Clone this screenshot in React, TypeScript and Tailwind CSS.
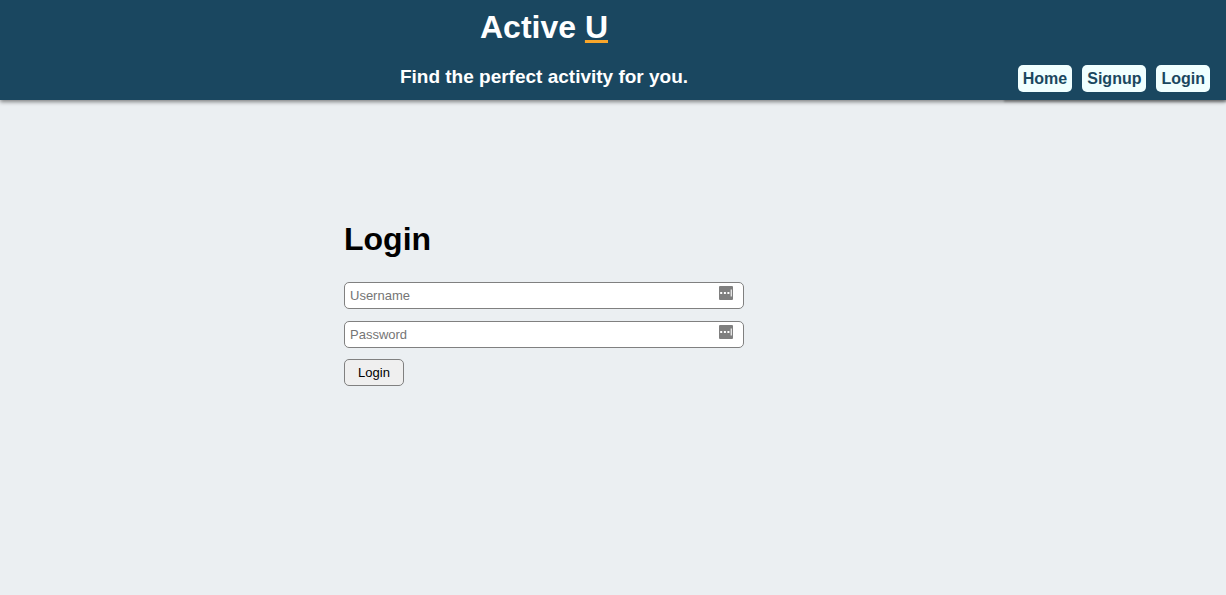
import React from "react";

const links = ["Home", "Signup", "Login"];

function FieldIcon() {
  return (
    <svg width="14" height="14" viewBox="0 0 14 14" aria-hidden="true">
      <rect width="14" height="14" rx="1" fill="#7f7f7f" />
      <path d="M1.2 6h2v2h-2zM4.9 6h2v2h-2zM8.4 6h2v2h-2z" fill="#fff" />
      <path d="M11.6 3.5h1.4v7h-1.4z" fill="#e4e4e4" />
    </svg>
  );
}

function Field({ label, type }: { label: string; type: string }) {
  return (
    <div className="relative">
      <input
        type={type}
        aria-label={label}
        placeholder={label}
        className="block h-[27px] w-full rounded-[5px] border border-[#808080] bg-white px-[5px] text-[13px] text-black placeholder:text-[#757575]"
      />
      <span className="pointer-events-none absolute right-[11px] top-1">
        <FieldIcon />
      </span>
    </div>
  );
}

export default function App() {
  return (
    <div className="min-h-screen bg-[#ebeff2] font-['Liberation_Sans',Arial,sans-serif]">
      <header className="grid h-[100px] grid-cols-[86px_1fr_224px] bg-[#1a4760] text-white shadow-[0_2px_4px_rgba(0,0,0,0.45)]">
        <div className="col-start-2 flex flex-col items-center pt-[9px] font-bold">
          <h1 className="text-[32px] leading-9">
            Active{" "}
            <span className="underline decoration-[#f9a62b] decoration-[3px] underline-offset-2">U</span>
          </h1>
          <h2 className="mt-[21px] text-[19px] leading-[22px]">Find the perfect activity for you.</h2>
        </div>
        <nav className="col-start-3 flex items-end justify-end gap-2.5 pr-4 pb-2 shadow-[2px_2px_2px_rgba(0,0,0,0.25)]">
          {links.map((label) => (
            <a
              key={label}
              href={`#${label.toLowerCase()}`}
              className="rounded-[5px] bg-[#f0ffff] px-[5px] text-[16px] leading-[27px] font-bold text-[#1a4760]"
            >
              {label}
            </a>
          ))}
        </nav>
      </header>
      <main className="grid grid-cols-[86px_1fr_224px] pt-[121px]">
        <form className="col-start-2 w-[400px] max-w-full justify-self-center" onSubmit={(e) => e.preventDefault()}>
          <h2 className="text-[32px] leading-9 font-bold text-black">Login</h2>
          <div className="mt-[25px] flex flex-col gap-3">
            <Field label="Username" type="text" />
            <Field label="Password" type="password" />
          </div>
          <button
            type="submit"
            className="mt-[11px] h-[27px] w-[60px] rounded-[5px] border border-[#808080] bg-[#efefef] text-[13px] text-black"
          >
            Login
          </button>
        </form>
      </main>
    </div>
  );
}
